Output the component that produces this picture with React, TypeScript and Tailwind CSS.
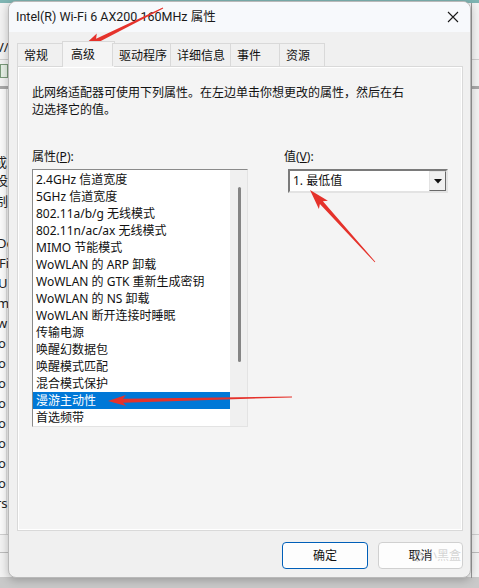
import React from "react";

const FONT = { fontFamily: '"Noto Sans", "Noto Sans CJK SC", sans-serif' };

type Pt = [number, number];
function arrowPoly(tail: Pt, tip: Pt, headLen: number, headW: number, shaftW: number) {
  const dx = tip[0] - tail[0];
  const dy = tip[1] - tail[1];
  const len = Math.hypot(dx, dy);
  const ux = dx / len;
  const uy = dy / len;
  const nx = -uy;
  const ny = ux;
  const bx = tip[0] - ux * headLen;
  const by = tip[1] - uy * headLen;
  const nbx = bx + ux * 3;
  const nby = by + uy * 3;
  const p = (x: number, y: number) => `${x.toFixed(1)},${y.toFixed(1)}`;
  return [
    p(tail[0] + nx * 0.4, tail[1] + ny * 0.4),
    p(nbx + nx * shaftW / 2, nby + ny * shaftW / 2),
    p(bx + nx * headW / 2, by + ny * headW / 2),
    p(tip[0], tip[1]),
    p(bx - nx * headW / 2, by - ny * headW / 2),
    p(nbx - nx * shaftW / 2, nby - ny * shaftW / 2),
    p(tail[0] - nx * 0.4, tail[1] - ny * 0.4),
  ].join(" ");
}

const items = [
  "2.4GHz 信道宽度",
  "5GHz 信道宽度",
  "802.11a/b/g 无线模式",
  "802.11n/ac/ax 无线模式",
  "MIMO 节能模式",
  "WoWLAN 的 ARP 卸载",
  "WoWLAN 的 GTK 重新生成密钥",
  "WoWLAN 的 NS 卸载",
  "WoWLAN 断开连接时睡眠",
  "传输电源",
  "唤醒幻数据包",
  "唤醒模式匹配",
  "混合模式保护",
  "漫游主动性",
  "首选频带",
];

const tabs = ["常规", "高级", "驱动程序", "详细信息", "事件", "资源"];
const tabW = [46, 51, 58, 60, 49, 45];

const bgFrags: { y: number; x: number; t: string }[] = [
  { y: 153, x: -6, t: "成" },
  { y: 171, x: -5, t: "设" },
  { y: 192, x: -5, t: "制" },
  { y: 234, x: -3, t: "De" },
  { y: 254, x: -1, t: "Fi" },
  { y: 274, x: -2, t: "U" },
  { y: 294, x: -3, t: "m" },
  { y: 314, x: -3, t: "w" },
  { y: 334, x: -2, t: "o" },
  { y: 354, x: -2, t: "o" },
  { y: 374, x: -2, t: "o" },
  { y: 394, x: -2, t: "o" },
  { y: 414, x: -2, t: "o" },
  { y: 434, x: -2, t: "o" },
  { y: 454, x: -2, t: "o" },
  { y: 474, x: -2, t: "o" },
  { y: 494, x: -4, t: "rs" },
];

export default function App() {
  return (
    <div className="relative w-[479px] h-[588px] overflow-hidden bg-[#f0f0f0]" style={FONT}>
      {/* background window */}
      <div className="absolute inset-0 bg-[#f3f3f3]">
        <div className="h-[3px] bg-[#7fb5b3]" />
        <div className="absolute left-0 top-[38px] text-[13px] text-[#222] leading-[18px]" style={{ left: -4 }}>
          V/
        </div>
        <div className="absolute left-0 top-[64px] w-[8px] h-[14px] border border-[#7a9a7a] bg-[#e6f0e6]" />
        <div className="absolute left-0 top-[86px] w-full h-[3px] bg-[#a8a8a8]" />
        <div className="absolute left-0 top-[59px] w-full h-[1px] bg-[#cfcfcf]" />
        <div className="absolute left-0 top-[89px] w-[7px] h-[445px] bg-[#fbfbfb] border-r border-[#dedede]" />
        {bgFrags.map((f, i) => (
          <div
            key={i}
            className="absolute text-[13px] leading-[18px] text-[#222] whitespace-nowrap"
            style={{ top: f.y, left: f.x }}
          >
            {f.t}
          </div>
        ))}
        <div className="absolute left-0 top-[534px] w-full h-[1px] bg-[#cfcfcf]" />
        <div className="absolute left-0 top-[552px] w-full h-[1px] bg-[#bdbdbd]" />
        <div className="absolute left-0 top-[577px] w-full h-[11px] bg-[#c9c9c9]" />
        <div className="absolute right-[7px] top-[3px] w-[1px] h-[575px] bg-[#9a9a9a]" />
      </div>

      {/* dialog */}
      <div className="absolute left-[8px] top-[1px] w-[463px] h-[577px] rounded-[8px] bg-[#f0f0f0] border border-[#b9b9b9] shadow-[0_2px_10px_rgba(0,0,0,0.25)] overflow-hidden flex flex-col">
        {/* title bar */}
        <div className="h-[30px] shrink-0 bg-[#f7f9fc] flex items-center justify-between pl-[7px] pr-[10px]">
          <span className="text-[12.5px] text-[#1a1a1a]" style={{ fontFamily: 'Roboto, "Noto Sans CJK SC", sans-serif' }}>
            Intel(R) Wi-Fi 6 AX200 160MHz 属性
          </span>
          <svg width="12" height="12" viewBox="0 0 12 12" className="mr-[1px]">
            <path d="M1 1 L11 11 M11 1 L1 11" stroke="#1a1a1a" strokeWidth="1.1" />
          </svg>
        </div>

        {/* body */}
        <div className="flex-1 flex flex-col pl-[8px] pr-[8px] pt-[9px]">
          {/* tabs */}
          <div className="flex items-end h-[25px] relative z-10">
            {tabs.map((t, i) => {
              const sel = i === 1;
              return (
                <div
                  key={t}
                  className={
                    sel
                      ? "h-[26px] -mb-[1px] -mx-[2px] border border-b-0 border-[#d9d9d9] bg-[#f4f4f4] flex items-start pt-[4px] pl-[8px] text-[12px] text-[#111]"
                      : "h-[23px] border border-b-0 border-[#d9d9d9] bg-[#f0f0f0] flex items-start pt-[3px] pl-[6px] text-[12px] text-[#111] -ml-[1px] first:ml-0"
                  }
                  style={{ width: tabW[i] + (sel ? 2 : 1) }}
                >
                  {t}
                </div>
              );
            })}
          </div>

          {/* panel */}
          <div className="w-[446px] h-[465px] border border-[#d9d9d9] bg-[#f4f4f4] shadow-[inset_0_0_0_1px_#ffffff] pl-[14px] pt-[17px] flex flex-col">
            <div className="text-[12px] leading-[17px] text-[#111]">
              <div>此网络适配器可使用下列属性。在左边单击你想更改的属性，然后在右</div>
              <div>边选择它的值。</div>
            </div>

            <div className="flex mt-[30px]">
              {/* left column */}
              <div className="flex flex-col w-[216px]">
                <div className="text-[12px] leading-[17px] text-[#111] h-[21px]">
                  属性(<span className="underline">P</span>):
                </div>
                <div className="w-[216px] h-[258px] bg-white border border-t-[#8a8a8a] border-l-[#8a8a8a] border-r-[#e3e3e3] border-b-[#e3e3e3] flex">
                  <div className="flex-1 pt-[1px] flex flex-col overflow-hidden">
                    {items.map((it, i) => (
                      <div
                        key={it}
                        className={
                          i === 13
                            ? "h-[17px] shrink-0 leading-[17px] pl-[3px] text-[12px] whitespace-nowrap bg-[#0078d7] text-white"
                            : "h-[17px] shrink-0 leading-[17px] pl-[3px] text-[12px] whitespace-nowrap text-[#111]"
                        }
                      >
                        {it}
                      </div>
                    ))}
                  </div>
                  <div className="w-[17px] bg-[#f0f0f0] flex justify-center pt-[17px]">
                    <div className="w-[3px] h-[175px] rounded-full bg-[#858585] ml-[1px]" />
                  </div>
                </div>
              </div>

              {/* right column */}
              <div className="flex flex-col ml-[36px]">
                <div className="text-[12px] leading-[17px] text-[#111] h-[21px]">
                  值(<span className="underline">V</span>):
                </div>
                <div className="ml-[4px] w-[160px] h-[24px] bg-white border-2 border-t-[#7a7a7a] border-l-[#7a7a7a] border-r-[#e3e3e3] border-b-[#e3e3e3] flex">
                  <div className="flex-1 pl-[3px] text-[12px] leading-[20px] text-[#111]">1. 最低值</div>
                  <div className="w-[17px] h-[20px] bg-[#f0f0f0] border border-t-[#e3e3e3] border-l-[#e3e3e3] border-r-[#696969] border-b-[#696969] flex items-center justify-center">
                    <svg width="8" height="5" viewBox="0 0 8 5">
                      <path d="M0 0 H8 L4 4.5 Z" fill="#111" />
                    </svg>
                  </div>
                </div>
              </div>
            </div>
          </div>

          {/* buttons */}
          <div className="flex justify-end gap-[10px] mt-[11px]">
            <button className="w-[86px] h-[27px] rounded-[4px] border border-[#005fb8] bg-[#fdfdfd] text-[12px] text-[#111] shadow-[inset_0_0_0_1px_#ffffff]">
              确定
            </button>
            <button className="relative w-[85px] h-[27px] rounded-[4px] border border-[#d0d0d0] bg-[#fdfdfd] text-[12px] text-[#111] -mr-[1px]">
              取消
              <span className="absolute left-[33px] top-[4px] flex items-center gap-[2px] whitespace-nowrap text-[12px] leading-[17px] text-[rgba(170,170,170,0.5)]">
                <svg width="11" height="12" viewBox="0 0 13 14">
                  <path d="M6.5 1 L12 4 V10 L6.5 13 L1 10 V4 Z M6.5 1 V7 M1 4 L6.5 7 L12 4" fill="none" stroke="rgba(170,170,170,0.55)" strokeWidth="1.2" />
                </svg>
                小黑盒
              </span>
            </button>
          </div>
        </div>
      </div>

      {/* annotation arrows */}
      <svg className="absolute inset-0 pointer-events-none" width="479" height="588" viewBox="0 0 479 588">
        <polygon points={arrowPoly([163, 8], [80, 49], 22, 13, 4)} fill="#e5322b" />
        <polygon points={arrowPoly([375, 262], [310, 190], 20, 12, 4)} fill="#e5322b" />
        <polygon points={arrowPoly([292, 397], [108, 401], 18, 11, 4)} fill="#e5322b" />
      </svg>
    </div>
  );
}
